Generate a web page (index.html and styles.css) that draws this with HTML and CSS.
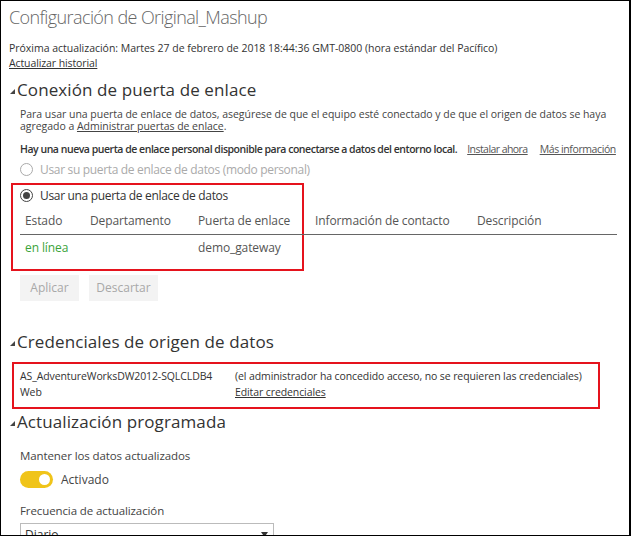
FILE: index.html
```html
<!DOCTYPE html>
<html lang="es">
<head>
<meta charset="utf-8">
<link rel="stylesheet" href="styles.css">
</head>
<body>
<div class="frame">
  <h1 class="title">Configuración de Original_Mashup</h1>
  <p class="next">Próxima actualización: Martes 27 de febrero de 2018 18:44:36 GMT-0800 (hora estándar del Pacífico)</p>
  <div class="hist"><a class="link" href="#">Actualizar historial</a></div>

  <h2 class="sec sec-gw"><svg class="tri" width="5" height="5" viewBox="0 0 5 5"><polygon points="5,0 5,5 0,5" fill="#444"/></svg>Conexión de puerta de enlace</h2>
  <div class="indent">
    <div class="info"><div>Para usar una puerta de enlace de datos, asegúrese de que el equipo esté conectado y de que el origen de datos se haya</div><div>agregado a <a class="link" href="#">Administrar puertas de enlace</a>.</div></div>
    <div class="notice">
      <span class="bold">Hay una nueva puerta de enlace personal disponible para conectarse a datos del entorno local.</span>
      <a class="nlink nl1" href="#">Instalar ahora</a>
      <a class="nlink nl2" href="#">Más información</a>
    </div>
    <div class="radio disabled"><span class="circle"></span>Usar su puerta de enlace de datos (modo personal)</div>
  </div>
  <div class="gwbox">
    <div class="radio checked"><span class="circle"><span class="dot"></span></span>Usar una puerta de enlace de datos</div>
    <div class="table">
      <div class="trow thead">
        <span class="c1">Estado</span><span class="c2">Departamento</span><span class="c3">Puerta de enlace</span><span class="c4">Información de contacto</span><span class="c5">Descripción</span>
      </div>
      <div class="trow tbody">
        <span class="c1 green">en línea</span><span class="c2"></span><span class="c3">demo_gateway</span>
      </div>
    </div>
  </div>
  <div class="buttons indent">
    <span class="btn b1">Aplicar</span><span class="btn b2">Descartar</span>
  </div>

  <h2 class="sec sec-cred"><svg class="tri" width="5" height="5" viewBox="0 0 5 5"><polygon points="5,0 5,5 0,5" fill="#444"/></svg>Credenciales de origen de datos</h2>
  <div class="credbox">
    <div class="ccol1"><div>AS_AdventureWorksDW2012-SQLCLDB4</div><div>Web</div></div>
    <div class="ccol2"><div>(el administrador ha concedido acceso, no se requieren las credenciales)</div><div><a class="link" href="#">Editar credenciales</a></div></div>
  </div>

  <h2 class="sec sec-sched"><svg class="tri" width="5" height="5" viewBox="0 0 5 5"><polygon points="5,0 5,5 0,5" fill="#444"/></svg>Actualización programada</h2>
  <div class="indent">
    <div class="label keep">Mantener los datos actualizados</div>
    <div class="toggle-row"><span class="toggle"><span class="knob"></span></span><span class="tlabel">Activado</span></div>
    <div class="label freq">Frecuencia de actualización</div>
    <div class="select"><span>Diario</span><svg width="7" height="5" viewBox="0 0 7 5"><polygon points="0,0 7,0 3.5,5" fill="#333"/></svg></div>
  </div>
</div>
</body>
</html>
```
FILE: styles.css
```css
* { box-sizing: border-box; }
html, body { margin: 0; padding: 0; background: #fff; }
body { font-family: "Open Sans", "Noto Sans", sans-serif; color: #333; }
.frame {
  width: 631px; height: 536px; overflow: hidden;
  border: 1px solid #000; border-right-width: 2px;
  padding-left: 8px;
}
a { color: inherit; }
.link { text-decoration: underline; }
.title {
  margin: 3px 0 0 0; font-size: 18px; font-weight: 300; color: #666;
  line-height: 26px; letter-spacing: -0.6px;
}
.next { margin: 11px 0 0 0; font-size: 10.5px; line-height: 15px; color: #333; letter-spacing: -0.02px; }
.hist { font-size: 10.5px; line-height: 15px; color: #333; letter-spacing: -0.1px; }
.sec {
  margin: 10px 0 0 0; font-size: 17px; font-weight: 400; line-height: 22px; color: #333;
  display: flex; align-items: center; letter-spacing: 0.1px;
}
.sec-gw { margin-top: 8px; }
.tri { margin: 3px 2px 0 1px; flex-shrink: 0; }
.sec-cred { margin-top: 30px; }
.sec-sched { margin-top: 2px; }
.indent { padding-left: 11px; }
.info { margin: 6.5px 0 0 0; font-size: 10.5px; line-height: 12px; color: #444; letter-spacing: -0.03px; white-space: nowrap; }
.notice { margin-top: 10.5px; font-size: 10.5px; line-height: 15px; display: flex; color: #333; white-space: nowrap; }
.bold { font-weight: 600; letter-spacing: -0.47px; }
.nlink { color: #555; text-decoration: underline; letter-spacing: -0.55px; }
.nl1 { margin-left: 10px; }
.nl2 { margin-left: 12px; letter-spacing: -0.4px; }
.radio { display: flex; align-items: center; font-size: 12px; line-height: 18px; letter-spacing: -0.33px; }
.radio.disabled { color: #aaa; margin-top: 3.5px; }
.circle {
  width: 13px; height: 13px; border-radius: 50%; border: 1px solid #aaa;
  margin-right: 7px; display: inline-flex; align-items: center; justify-content: center; flex-shrink: 0;
}
.checked { color: #333; }
.checked .circle { border-color: #444; }
.dot { width: 7px; height: 7px; border-radius: 50%; background: #444; }
.gwbox {
  margin: 4px 0 0 2px; width: 293px; height: 88px;
  border: 2px solid #e5131d; padding: 2px 0 0 7px;
}
.table { width: 597px; margin-top: 5px; font-size: 12px; color: #555; letter-spacing: -0.1px; }
.trow { display: flex; white-space: nowrap; }
.thead { height: 25px; border-bottom: 1px solid #666; line-height: 22px; }
.tbody { line-height: 24px; padding-top: 1px; }
.c1 { width: 70px; padding-left: 5px; }
.c2 { width: 108px; }
.c3 { width: 117px; }
.c4 { width: 162px; }
.c5 { width: 120px; }
.green { color: #3aa33a; }
.buttons { display: flex; gap: 10px; margin-top: 4px; }
.btn {
  height: 26px; background: #f3f3f3; color: #a8a8a8; font-size: 12px;
  line-height: 26px; text-align: center;
}
.b1 { width: 59px; }
.b2 { width: 69px; }
.credbox {
  margin: 9px 0 0 3px; width: 588px; height: 47px; border: 2px solid #e5131d;
  display: flex; padding: 4px 0 0 6px; font-size: 10.5px; line-height: 16px; color: #333; letter-spacing: -0.1px;
  white-space: nowrap;
}
.ccol1 { width: 215px; }
.label { font-size: 11.5px; line-height: 16px; color: #444; letter-spacing: -0.1px; }
.keep { margin-top: 15px; }
.toggle-row { display: flex; align-items: center; margin-top: 7px; }
.toggle {
  width: 33px; height: 17px; border-radius: 9px; background: #f0c419; position: relative; flex-shrink: 0;
}
.knob {
  position: absolute; right: 3px; top: 3px; width: 11px; height: 11px; border-radius: 50%; background: #fff;
}
.tlabel { margin-left: 8px; font-size: 12px; line-height: 17px; color: #444; }
.freq { margin-top: 15px; }
.select {
  margin-top: 4px; width: 254px; height: 24px; border: 1px solid #bbb;
  display: flex; justify-content: space-between; align-items: center; padding: 0 5px 0 4px;
  font-size: 12px; color: #333;
}
```
